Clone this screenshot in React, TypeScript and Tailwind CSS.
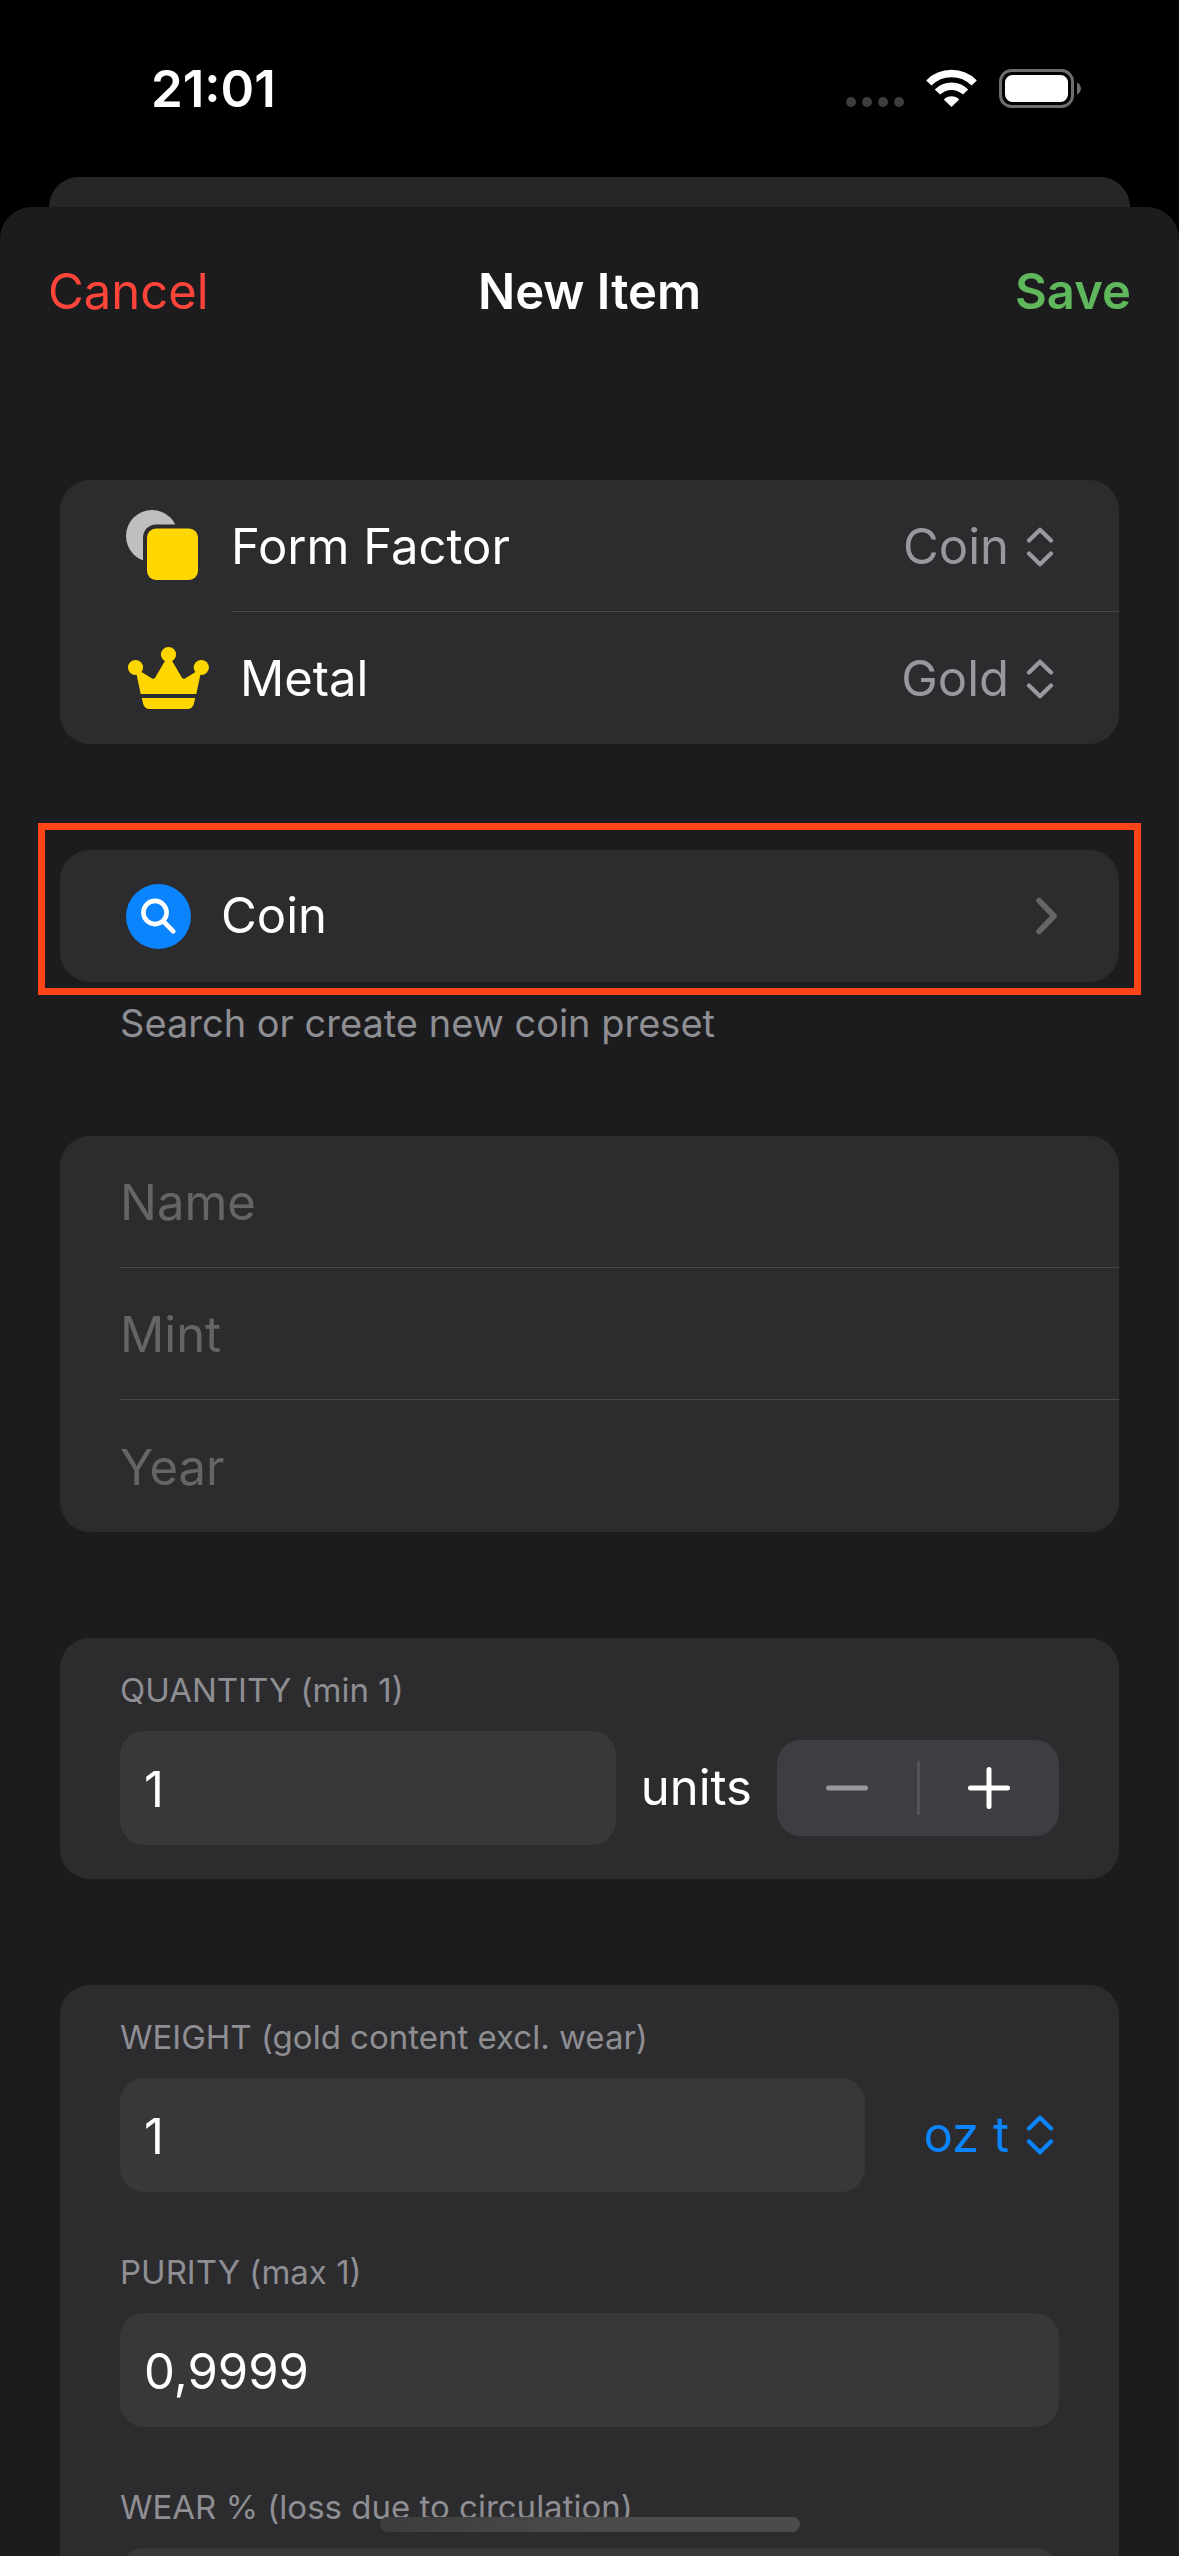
import { useState } from "react";
import type { ReactNode } from "react";

function StatusBar() {
  return (
    <div className="flex h-[177px] shrink-0 items-center justify-between pl-[151px] pr-[98px]">
      <time className="text-[51px] leading-[60px] font-semibold">21:01</time>
      <div className="flex items-center">
        <svg className="mr-[22px]" width="58" height="39" viewBox="0 0 58 39" fill="#3d3d3f" aria-label="No signal">
          <circle cx="5" cy="33" r="5" />
          <circle cx="21" cy="33" r="5" />
          <circle cx="37" cy="33" r="5" />
          <circle cx="53" cy="33" r="5" />
        </svg>
        <svg className="mr-[22px]" width="51" height="39" viewBox="0 0 51 39" aria-label="Wi-Fi">
          <g fill="none" stroke="#fff" strokeWidth="7.4">
            <path d="M2.8 14 A32 32 0 0 1 48.2 14" />
            <path d="M11.4 23 A20 20 0 0 1 39.6 23" />
          </g>
          <path d="M25.5 38 L17.8 30.4 A11 11 0 0 1 33.2 30.4 Z" fill="#fff" />
        </svg>
        <svg width="82" height="39" viewBox="0 0 82 39" aria-label="Battery full">
          <rect x="1.5" y="1.5" width="72" height="36" rx="11" fill="none" stroke="#6e6e6e" strokeWidth="3" />
          <rect x="6" y="6" width="63" height="27" rx="7.5" fill="#fff" />
          <path d="M78 13.5 C83.2 15.5 83.2 23.5 78 25.5 Z" fill="#6e6e6e" />
        </svg>
      </div>
    </div>
  );
}

function FormFactorIcon() {
  return (
    <svg width="75" height="74" viewBox="0 0 75 74" aria-hidden="true">
      <circle cx="26" cy="27" r="26" fill="#bfbfbf" />
      <rect x="17" y="15.5" width="59" height="59" rx="13" fill="#2c2c2e" />
      <rect x="21" y="19.5" width="51" height="51.5" rx="9" fill="#ffd700" />
    </svg>
  );
}

function CrownIcon() {
  return (
    <svg width="84" height="64" viewBox="0 0 84 64" fill="#ffd700" aria-hidden="true">
      <circle cx="9.5" cy="21.5" r="7.6" />
      <circle cx="42.5" cy="8.5" r="7.6" />
      <circle cx="75.3" cy="21.5" r="7.6" />
      <path d="M10.5 28 L15.5 26 L26 32.5 Q28 33.5 29.2 31.5 L39.5 14 H45.5 L55.8 31.5 Q57 33.5 59 32.5 L69.5 26 L74.5 28 L70.3 48 H14.7 Z" />
      <path d="M15.8 52 H69.2 L67.8 58 Q66.3 63 61.5 63 H23.5 Q18.7 63 17.2 58 Z" />
    </svg>
  );
}

function SearchIcon() {
  return (
    <svg width="65" height="65" viewBox="0 0 65 65" aria-hidden="true">
      <circle cx="32.5" cy="32.5" r="32.5" fill="#0a84ff" />
      <g fill="none" stroke="#fff" strokeWidth="4.6" strokeLinecap="round">
        <circle cx="29" cy="28.5" r="11.6" />
        <path d="M37.5 37.5 L47.3 47.3" />
      </g>
    </svg>
  );
}

function UpDown() {
  return (
    <svg
      className="ml-[17px] shrink-0"
      width="28"
      height="40"
      viewBox="0 0 28 40"
      fill="none"
      stroke="currentColor"
      strokeWidth="4.2"
      strokeLinecap="round"
      strokeLinejoin="round"
      aria-hidden="true"
    >
      <path d="M3 13.5 L14 2.8 L25 13.5" />
      <path d="M3 26.5 L14 37.2 L25 26.5" />
    </svg>
  );
}

function Picker({ id, label, options, color }: { id: string; label?: string; options: string[]; color: string }) {
  return (
    <div className={`flex items-center ${color}`}>
      <select
        id={id}
        aria-label={label}
        className="field-sizing-content appearance-none bg-transparent text-right text-[49px] leading-[60px] outline-none"
      >
        {options.map((o) => (
          <option key={o}>{o}</option>
        ))}
      </select>
      <UpDown />
    </div>
  );
}

function Card({ children, className = "" }: { children: ReactNode; className?: string }) {
  return <div className={`rounded-[30px] bg-[#2c2c2e] ${className}`}>{children}</div>;
}

function PickerRow({
  id,
  icon,
  label,
  options,
  divider,
}: {
  id: string;
  icon: ReactNode;
  label: string;
  options: string[];
  divider?: boolean;
}) {
  return (
    <div className="flex h-[132px] items-center gap-[30px] pl-[66px]">
      {icon}
      <div
        className={`flex h-full flex-1 items-center justify-between pt-[2px] pr-[65px] ${divider ? "border-b border-[#4a4a4c]" : ""}`}
      >
        <label htmlFor={id}>{label}</label>
        <Picker id={id} options={options} color="text-[#98989e]" />
      </div>
    </div>
  );
}

function Field({
  id,
  label,
  value,
  onChange,
  children,
}: {
  id: string;
  label: string;
  value: string;
  onChange: (v: string) => void;
  children?: ReactNode;
}) {
  return (
    <div className="flex flex-col gap-[21px]">
      <label htmlFor={id} className="text-[33px] leading-[40px] text-[#8e8e93]">
        {label}
      </label>
      <div className="flex items-center">
        <input
          id={id}
          inputMode="decimal"
          value={value}
          onChange={(e) => onChange(e.target.value)}
          className="h-[114px] min-w-0 flex-1 rounded-[24px] bg-[#38383a] px-[24px] pt-[2px] text-[49px] outline-none"
        />
        {children}
      </div>
    </div>
  );
}

export default function App() {
  const [quantity, setQuantity] = useState("1");
  const [weight, setWeight] = useState("1");
  const [purity, setPurity] = useState("0,9999");
  const [wear, setWear] = useState("");
  const count = Number(quantity) || 1;
  const details = ["Name", "Mint", "Year"];

  return (
    <div className="relative flex h-screen flex-col overflow-hidden bg-black font-['Inter',sans-serif] text-[49px] leading-[60px] text-white">
      <StatusBar />
      <div className="mx-[49px] h-[30px] shrink-0 rounded-t-[30px] bg-[#262628]" />
      <main className="flex min-h-0 flex-1 flex-col rounded-t-[32px] bg-[#1c1c1e]">
        <header className="grid shrink-0 grid-cols-3 items-center px-[48px] pt-[55px]">
          <button type="button" className="justify-self-start text-[#ff453a]">
            Cancel
          </button>
          <h1 className="justify-self-center font-semibold whitespace-nowrap">New Item</h1>
          <button type="button" className="justify-self-end font-semibold text-[#5fb85b]">
            Save
          </button>
        </header>

        <form className="min-h-0 flex-1 overflow-y-auto px-[60px] pt-[158px] [scrollbar-width:none]">
          <Card className="mb-[106px]">
            <PickerRow
              id="form-factor"
              icon={<FormFactorIcon />}
              label="Form Factor"
              options={["Coin", "Bar", "Round"]}
              divider
            />
            <PickerRow id="metal" icon={<CrownIcon />} label="Metal" options={["Gold", "Silver"]} />
          </Card>

          <section className="mb-[86px]">
            <div className="relative">
              <Card>
                <button type="button" className="flex h-[132px] w-full items-center gap-[30px] pr-[60px] pl-[66px]">
                  <SearchIcon />
                  <span className="flex-1 text-left">Coin</span>
                  <svg
                    width="24"
                    height="40"
                    viewBox="0 0 24 40"
                    fill="none"
                    stroke="#656567"
                    strokeWidth="5.6"
                    strokeLinecap="round"
                    strokeLinejoin="round"
                    aria-hidden="true"
                  >
                    <path d="M4 4.5 L19 20 L4 35.5" />
                  </svg>
                </button>
              </Card>
              <div className="pointer-events-none absolute -inset-x-[22px] -top-[27px] -bottom-[13px] border-[7px] border-[#ff4517]" />
            </div>
            <p className="px-[60px] pt-[14px] text-[38px] leading-[54px] text-[#8e8e93]">
              Search or create new coin preset
            </p>
          </section>

          <Card className="mb-[106px] pl-[60px]">
            {details.map((d, i) => (
              <div key={d} className={`h-[132px] ${i < 2 ? "border-b border-[#4a4a4c]" : ""}`}>
                <input
                  aria-label={d}
                  placeholder={d}
                  className="h-full w-full bg-transparent pt-[2px] pr-[60px] text-[49px] outline-none placeholder:text-[#656567]"
                />
              </div>
            ))}
          </Card>

          <Card className="mb-[106px] px-[60px] pt-[32px] pb-[34px]">
            <Field id="quantity" label="QUANTITY (min 1)" value={quantity} onChange={setQuantity}>
              <span className="mx-[25px]">units</span>
              <div className="flex h-[96px] w-[282px] items-center rounded-[24px] bg-[#3e3d42]">
                <button
                  type="button"
                  aria-label="Decrease quantity"
                  disabled={count <= 1}
                  onClick={() => setQuantity(String(count - 1))}
                  className="flex h-full flex-1 items-center justify-center"
                >
                  <svg width="42" height="42" viewBox="0 0 42 42" stroke="#98979d" strokeWidth="5" strokeLinecap="round">
                    <path d="M2.5 21 H39.5" />
                  </svg>
                </button>
                <div className="h-[54px] w-[3px] rounded-full bg-[#545358]" />
                <button
                  type="button"
                  aria-label="Increase quantity"
                  onClick={() => setQuantity(String(count + 1))}
                  className="flex h-full flex-1 items-center justify-center"
                >
                  <svg width="42" height="42" viewBox="0 0 42 42" stroke="#fff" strokeWidth="5" strokeLinecap="round">
                    <path d="M2.5 21 H39.5 M21 2.5 V39.5" />
                  </svg>
                </button>
              </div>
            </Field>
          </Card>

          <Card className="flex flex-col gap-[60px] px-[60px] pt-[32px] pb-[34px]">
            <Field id="weight" label="WEIGHT (gold content excl. wear)" value={weight} onChange={setWeight}>
              <div className="flex w-[194px] justify-end pr-[5px]">
                <Picker id="unit" label="Weight unit" options={["oz t", "g", "kg"]} color="text-[#0a84ff]" />
              </div>
            </Field>
            <Field id="purity" label="PURITY (max 1)" value={purity} onChange={setPurity} />
            <Field id="wear" label="WEAR % (loss due to circulation)" value={wear} onChange={setWear} />
          </Card>
        </form>
      </main>
      <div className="pointer-events-none absolute inset-x-0 bottom-[24px] flex justify-center">
        <div className="h-[15px] w-[420px] rounded-full bg-linear-to-r from-[#3c3c3e] to-[#4b4b4b] to-50%" />
      </div>
    </div>
  );
}
